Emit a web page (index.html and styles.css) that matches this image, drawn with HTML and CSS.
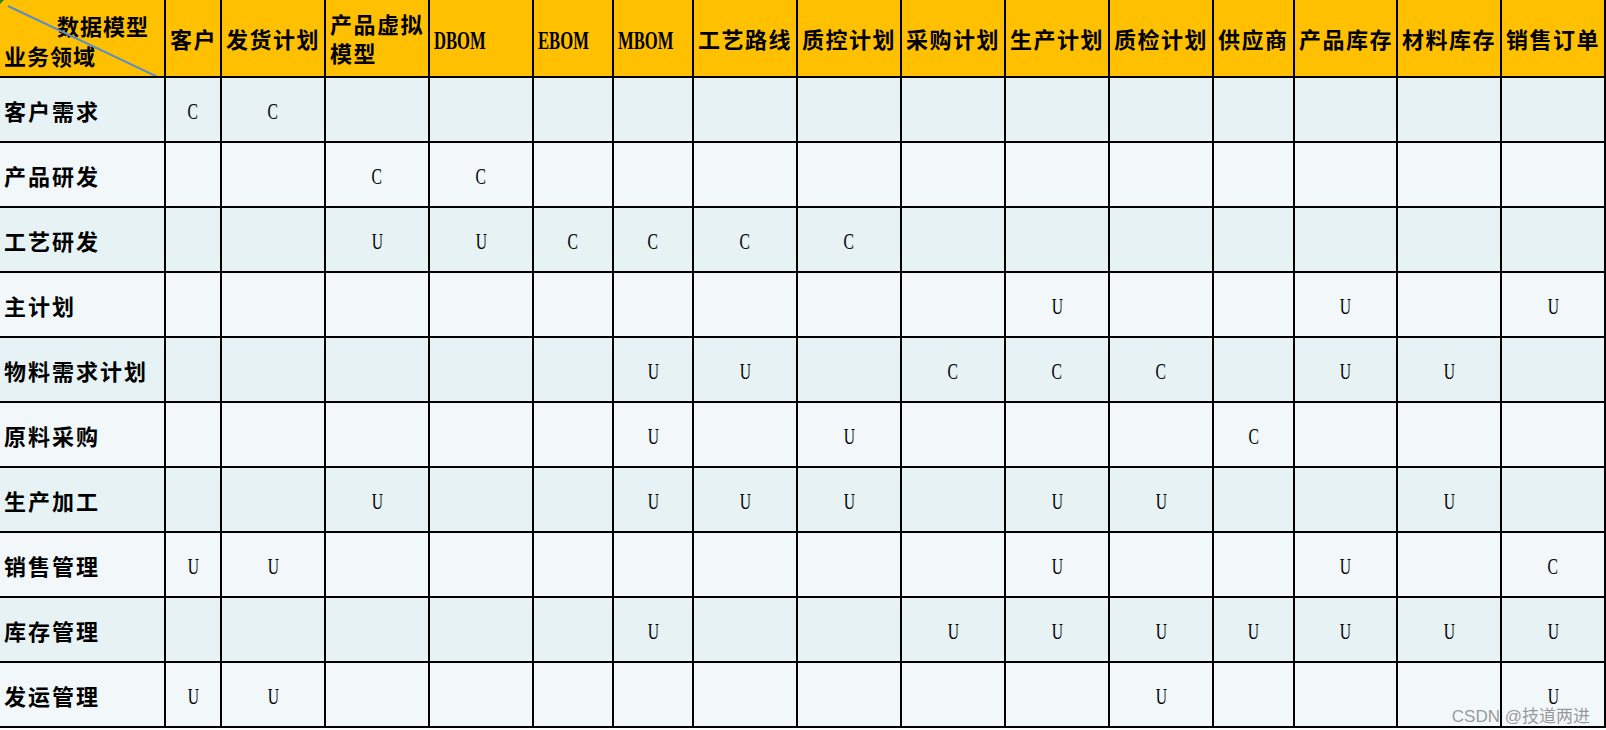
FILE: index.html
```html
<!DOCTYPE html>
<html lang="zh-CN">
<head>
<meta charset="utf-8">
<title>业务领域 / 数据模型 CRUD 矩阵</title>
<link rel="stylesheet" href="styles.css">
</head>
<body>
<div class="sheet">
  <div class="matrix">
    <div class="row head">
      <div class="corner">
        <svg class="diag" width="164" height="76" viewBox="0 0 164 76"><line x1="8" y1="6" x2="162" y2="79" stroke="#5b8ec9" stroke-width="2"/></svg>
        <span class="corner-top">数据模型</span>
        <span class="corner-bottom">业务领域</span>
      </div>
      <div class="hc">客户</div>
      <div class="hc">发货计划</div>
      <div class="hc">产品虚拟模型</div>
      <div class="hc"><span class="lat">DBOM</span></div>
      <div class="hc"><span class="lat">EBOM</span></div>
      <div class="hc"><span class="lat">MBOM</span></div>
      <div class="hc">工艺路线</div>
      <div class="hc">质控计划</div>
      <div class="hc">采购计划</div>
      <div class="hc">生产计划</div>
      <div class="hc">质检计划</div>
      <div class="hc">供应商</div>
      <div class="hc">产品库存</div>
      <div class="hc">材料库存</div>
      <div class="hc">销售订单</div>
    </div>

    <div class="row a">
      <div class="lbl">客户需求</div>
      <div class="c"><span>C</span></div><div class="c"><span>C</span></div><div class="c"></div><div class="c"></div><div class="c"></div>
      <div class="c"></div><div class="c"></div><div class="c"></div><div class="c"></div><div class="c"></div>
      <div class="c"></div><div class="c"></div><div class="c"></div><div class="c"></div><div class="c"></div>
    </div>
    <div class="row b">
      <div class="lbl">产品研发</div>
      <div class="c"></div><div class="c"></div><div class="c"><span>C</span></div><div class="c"><span>C</span></div><div class="c"></div>
      <div class="c"></div><div class="c"></div><div class="c"></div><div class="c"></div><div class="c"></div>
      <div class="c"></div><div class="c"></div><div class="c"></div><div class="c"></div><div class="c"></div>
    </div>
    <div class="row a">
      <div class="lbl">工艺研发</div>
      <div class="c"></div><div class="c"></div><div class="c"><span>U</span></div><div class="c"><span>U</span></div><div class="c"><span>C</span></div>
      <div class="c"><span>C</span></div><div class="c"><span>C</span></div><div class="c"><span>C</span></div><div class="c"></div><div class="c"></div>
      <div class="c"></div><div class="c"></div><div class="c"></div><div class="c"></div><div class="c"></div>
    </div>
    <div class="row b">
      <div class="lbl">主计划</div>
      <div class="c"></div><div class="c"></div><div class="c"></div><div class="c"></div><div class="c"></div>
      <div class="c"></div><div class="c"></div><div class="c"></div><div class="c"></div><div class="c"><span>U</span></div>
      <div class="c"></div><div class="c"></div><div class="c"><span>U</span></div><div class="c"></div><div class="c"><span>U</span></div>
    </div>
    <div class="row a">
      <div class="lbl">物料需求计划</div>
      <div class="c"></div><div class="c"></div><div class="c"></div><div class="c"></div><div class="c"></div>
      <div class="c"><span>U</span></div><div class="c"><span>U</span></div><div class="c"></div><div class="c"><span>C</span></div><div class="c"><span>C</span></div>
      <div class="c"><span>C</span></div><div class="c"></div><div class="c"><span>U</span></div><div class="c"><span>U</span></div><div class="c"></div>
    </div>
    <div class="row b">
      <div class="lbl">原料采购</div>
      <div class="c"></div><div class="c"></div><div class="c"></div><div class="c"></div><div class="c"></div>
      <div class="c"><span>U</span></div><div class="c"></div><div class="c"><span>U</span></div><div class="c"></div><div class="c"></div>
      <div class="c"></div><div class="c"><span>C</span></div><div class="c"></div><div class="c"></div><div class="c"></div>
    </div>
    <div class="row a">
      <div class="lbl">生产加工</div>
      <div class="c"></div><div class="c"></div><div class="c"><span>U</span></div><div class="c"></div><div class="c"></div>
      <div class="c"><span>U</span></div><div class="c"><span>U</span></div><div class="c"><span>U</span></div><div class="c"></div><div class="c"><span>U</span></div>
      <div class="c"><span>U</span></div><div class="c"></div><div class="c"></div><div class="c"><span>U</span></div><div class="c"></div>
    </div>
    <div class="row b">
      <div class="lbl">销售管理</div>
      <div class="c"><span>U</span></div><div class="c"><span>U</span></div><div class="c"></div><div class="c"></div><div class="c"></div>
      <div class="c"></div><div class="c"></div><div class="c"></div><div class="c"></div><div class="c"><span>U</span></div>
      <div class="c"></div><div class="c"></div><div class="c"><span>U</span></div><div class="c"></div><div class="c"><span>C</span></div>
    </div>
    <div class="row a">
      <div class="lbl">库存管理</div>
      <div class="c"></div><div class="c"></div><div class="c"></div><div class="c"></div><div class="c"></div>
      <div class="c"><span>U</span></div><div class="c"></div><div class="c"></div><div class="c"><span>U</span></div><div class="c"><span>U</span></div>
      <div class="c"><span>U</span></div><div class="c"><span>U</span></div><div class="c"><span>U</span></div><div class="c"><span>U</span></div><div class="c"><span>U</span></div>
    </div>
    <div class="row b">
      <div class="lbl">发运管理</div>
      <div class="c"><span>U</span></div><div class="c"><span>U</span></div><div class="c"></div><div class="c"></div><div class="c"></div>
      <div class="c"></div><div class="c"></div><div class="c"></div><div class="c"></div><div class="c"></div>
      <div class="c"><span>U</span></div><div class="c"></div><div class="c"></div><div class="c"></div><div class="c"><span>U</span></div>
    </div>
  </div>
  <div class="corner-mark"></div>
  <div class="watermark">CSDN @技道两进</div>
</div>
</body>
</html>
```
FILE: styles.css
```css
html, body {
  margin: 0;
  padding: 0;
  background: #ffffff;
  overflow: hidden;
}

.sheet {
  position: relative;
  width: 1606px;
  height: 730px;
}

.matrix {
  display: grid;
  grid-template-columns: 164px 54px 102px 102px 102px 78px 78px 102px 102px 102px 102px 102px 79px 101px 102px 102px;
  grid-template-rows: 76px repeat(10, 63px);
  gap: 2px;
  padding: 0 2px 2px 0;
  background: #000000;
  width: 1604px;
  font-family: "Noto Sans CJK SC", "Liberation Serif", serif;
  color: #000000;
}

.row {
  display: contents;
}

.head > div {
  background: #ffc000;
}

.row.a > div {
  background: #e7f2f4;
}

.row.b > div {
  background: #f2f8fa;
}

.hc {
  display: flex;
  align-items: center;
  padding-left: 4px;
  font-size: 22px;
  font-weight: 700;
  line-height: 29px;
  letter-spacing: 1.5px;
  overflow: hidden;
}

.hc .lat {
  display: inline-block;
  font-family: "Liberation Serif", serif;
  font-size: 26px;
  font-weight: 700;
  letter-spacing: 0;
  transform: scaleX(0.64);
  transform-origin: left center;
  margin-top: 4px;
}

.corner {
  position: relative;
  display: flex;
  flex-direction: column;
  justify-content: center;
  padding-top: 4px;
  font-size: 22px;
  font-weight: 700;
  line-height: 30px;
  letter-spacing: 1px;
  overflow: hidden;
}

.corner .diag {
  position: absolute;
  left: 0;
  top: 0;
}

.corner-top {
  align-self: flex-end;
  padding-right: 15px;
}

.corner-bottom {
  align-self: flex-start;
  padding-left: 4px;
}

.lbl {
  display: flex;
  align-items: center;
  padding-left: 4px;
  font-size: 22px;
  font-weight: 700;
  letter-spacing: 2px;
}

.c {
  display: flex;
  align-items: center;
  justify-content: center;
  padding-top: 4px;
}

.c span {
  display: inline-block;
  font-family: "Liberation Serif", serif;
  font-size: 23px;
  font-weight: 400;
  transform: scaleX(0.68);
}

.corner-mark {
  position: absolute;
  left: 0;
  top: 0;
  width: 0;
  height: 0;
  border-top: 4px solid #1f8a2a;
  border-right: 4px solid transparent;
}

.watermark {
  position: absolute;
  right: 16px;
  top: 702px;
  font-family: "Liberation Sans", "Noto Sans CJK SC", sans-serif;
  font-size: 17px;
  color: rgba(120, 120, 120, 0.75);
  white-space: nowrap;
}
```
